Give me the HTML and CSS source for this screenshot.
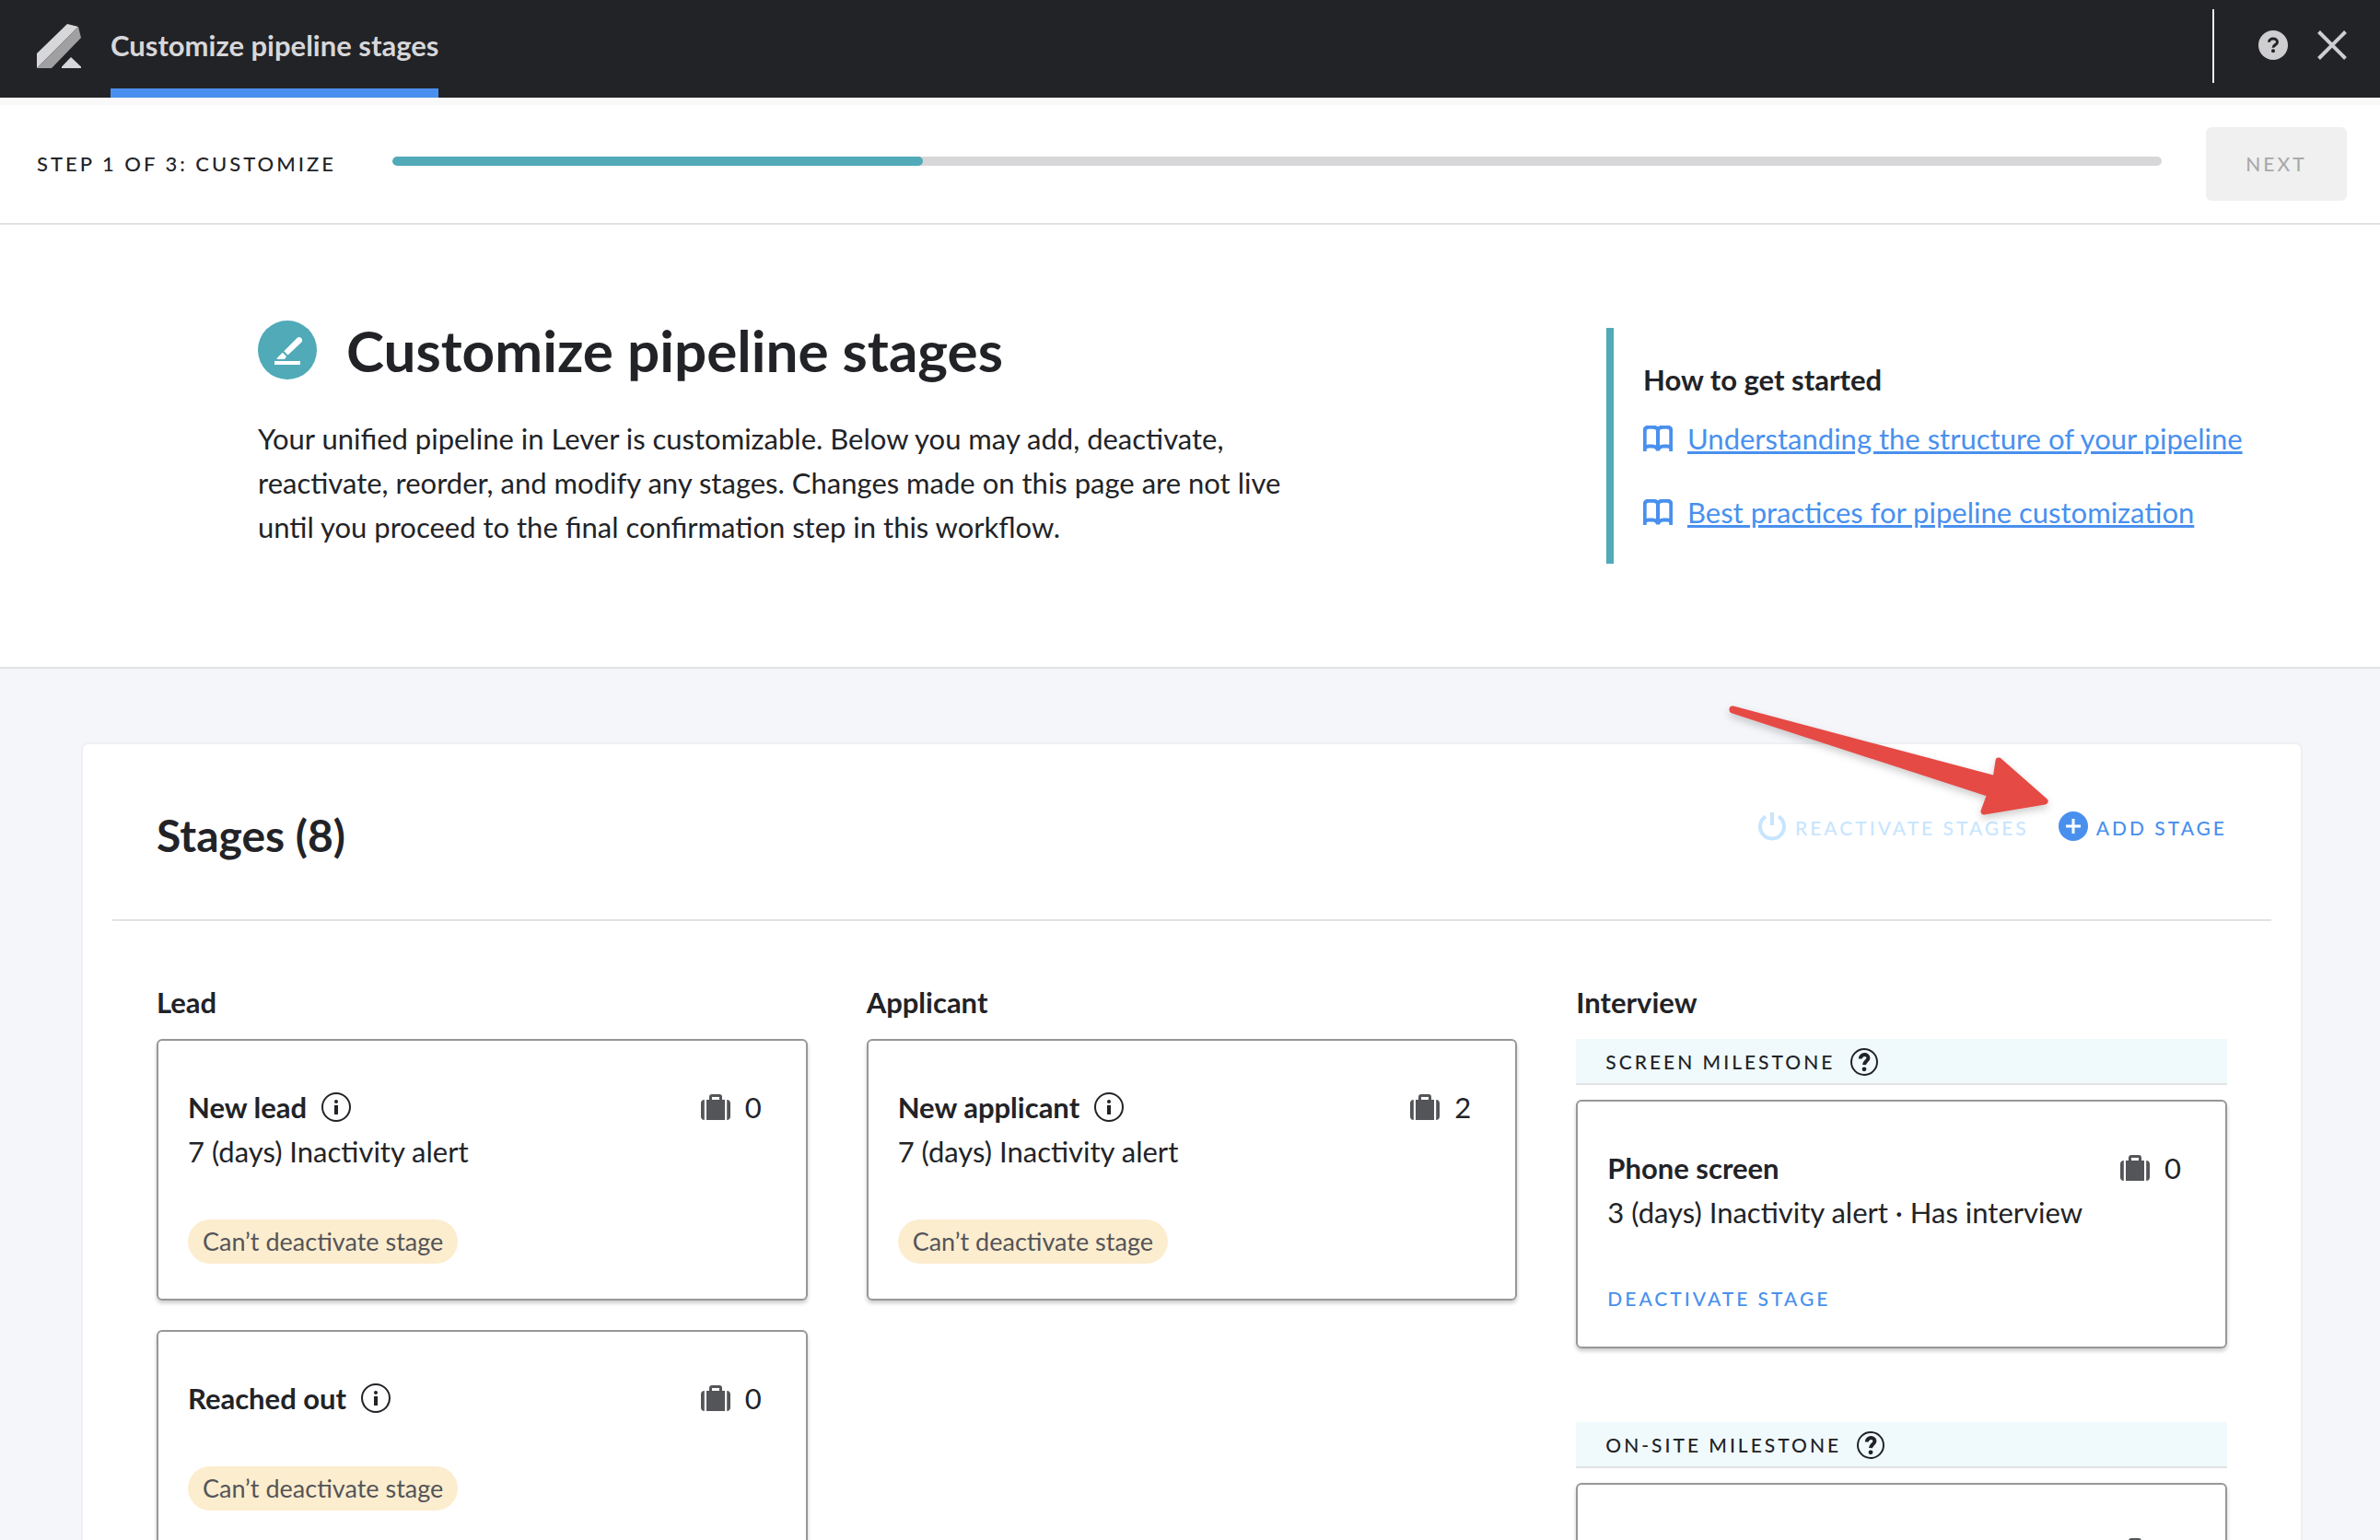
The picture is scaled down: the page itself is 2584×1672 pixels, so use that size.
FILE: index.html
```html
<!DOCTYPE html>
<html lang="en">
<head>
<meta charset="utf-8">
<title>Customize pipeline stages</title>
<link rel="stylesheet" href="styles.css">
</head>
<body>
<svg class="sprite" aria-hidden="true">
  <symbol id="info" viewBox="0 0 32 32"><circle cx="16" cy="16" r="15" fill="none" stroke="currentColor" stroke-width="2"/><rect x="14" y="14" width="4" height="10" fill="currentColor"/><circle cx="16" cy="10" r="2" fill="currentColor"/></symbol>
  <symbol id="question" viewBox="0 0 32 32"><circle cx="16" cy="16" r="14" fill="none" stroke="currentColor" stroke-width="2"/><path d="M11.800 12.500C12 6.500 20.600 6.800 20.400 11.800C20.300 15 16.200 15.300 16 19.200" fill="none" stroke="currentColor" stroke-width="4"/><circle cx="16" cy="23.800" r="2.400" fill="currentColor"/></symbol>
  <symbol id="case" viewBox="0 0 32 28"><path d="M6 6h20v22H6zM3.800 6v22C1.500 28 0 26.500 0 24V10C0 7.500 1.500 6 3.800 6zM28.200 6v22c2.300 0 3.800-1.500 3.800-4V10c0-2.500-1.500-4-3.800-4z" fill="currentColor"/><path d="M10.500 6.500V3Q10.500 1.500 12 1.500h8Q21.500 1.500 21.500 3v3.500" fill="none" stroke="currentColor" stroke-width="3"/></symbol>
  <symbol id="book" viewBox="0 0 32 28"><path d="M1.700 28V5.500Q1.700 1.700 6 1.700h4Q16 1.700 16 6Q16 1.700 22 1.700h4Q30.300 1.700 30.300 5.500V28M16 5v21M1.700 25Q3 22.500 6 22.500h4Q15 22.500 16 27Q17 22.500 22 22.500h4Q29 22.500 30.300 25" fill="none" stroke="currentColor" stroke-width="4"/></symbol>
</svg>

<header class="topbar">
  <svg class="logo" viewBox="0 0 48 48" aria-hidden="true"><path d="M33 0L45 3L0 48V32z" fill="#d7d7d9"/><path d="M45 3L48 15L16 48H0z" fill="#a0a0a2"/><path d="M37 36L48 46.500V48H27V46.500z" fill="#d7d7d9"/></svg>
  <a class="tab" href="#customize">Customize pipeline stages</a>
  <div class="tools">
    <button class="icon-button" type="button" aria-label="Help"><svg viewBox="0 0 32 32"><circle cx="16" cy="16" r="16" fill="#ceced1"/><path d="M11.500 12.800C11.500 7.800 20.500 7.800 20.500 12.800C20.500 15.800 16 15.500 16 18.800" fill="none" stroke="#222327" stroke-width="3"/><circle cx="16" cy="22.300" r="2" fill="#222327"/></svg></button>
    <button class="icon-button" type="button" aria-label="Close"><svg viewBox="0 0 32 32"><path d="M1.500 1.500L30.500 30.500M30.500 1.500L1.500 30.500" stroke="#ceced1" stroke-width="4"/></svg></button>
  </div>
</header>

<div class="stepbar">
  <label class="caps" for="progress">Step 1 of 3: Customize</label>
  <progress id="progress" class="progress" value="30" max="100"></progress>
  <button class="next caps" type="button" disabled>Next</button>
</div>

<section class="hero" id="customize">
  <div class="intro">
    <div class="intro-head">
      <svg class="badge" viewBox="0 0 64 64" aria-hidden="true"><circle cx="32" cy="32" r="32" fill="#50aab8"/><path d="M18 44h28v4H18z" fill="#fff"/><path d="M28.300 33.200L42.500 19Q45 17 47 19Q49 21 47.500 23.500L32.500 37.500zM26.800 34.800L31 39L29 42H20.500Q20.500 40.500 22 39.500z" fill="#fff"/></svg>
      <h1>Customize pipeline stages</h1>
    </div>
    <p>Your unified pipeline in Lever is customizable. Below you may add, deactivate, reactivate, reorder, and modify any stages. Changes made on this page are not live until you proceed to the final confirmation step in this workflow.</p>
  </div>
  <aside class="guide">
    <h2>How to get started</h2>
    <a href="#structure"><svg class="book"><use href="#book"/></svg><span>Understanding the structure of your pipeline</span></a>
    <a href="#practices"><svg class="book"><use href="#book"/></svg><span>Best practices for pipeline customization</span></a>
  </aside>
</section>

<main class="canvas">
  <section class="panel">
    <div class="panel-head">
      <h2>Stages (8)</h2>
      <div class="actions">
        <button class="action caps" type="button" disabled><svg viewBox="0 0 32 32"><path d="M9 5.500A13 13 0 1 0 23 5.500M16 1v14" fill="none" stroke="currentColor" stroke-width="4"/></svg>Reactivate stages</button>
        <button class="action caps" type="button"><svg viewBox="0 0 32 32"><circle cx="16" cy="16" r="16" fill="currentColor"/><path d="M16 8v16M8 16h16" stroke="#fff" stroke-width="3"/></svg>Add stage</button>
      </div>
      <svg class="pointer" viewBox="0 0 360 140" aria-hidden="true"><path d="M11 12L297 88L300 68L350 112L284 123L291 104L11 13z" fill="#e64a45" stroke="#e64a45" stroke-width="7" stroke-linejoin="round"/></svg>
    </div>
    <div class="columns">
      <section class="column">
        <h3>Lead</h3>
        <article class="card">
          <div class="card-head"><h4>New lead</h4><svg class="glyph"><use href="#info"/></svg><span class="count"><svg class="case"><use href="#case"/></svg>0</span></div>
          <p>7 (days) Inactivity alert</p>
          <span class="pill">Can’t deactivate stage</span>
        </article>
        <article class="card">
          <div class="card-head"><h4>Reached out</h4><svg class="glyph"><use href="#info"/></svg><span class="count"><svg class="case"><use href="#case"/></svg>0</span></div>
          <span class="pill">Can’t deactivate stage</span>
        </article>
      </section>
      <section class="column">
        <h3>Applicant</h3>
        <article class="card">
          <div class="card-head"><h4>New applicant</h4><svg class="glyph"><use href="#info"/></svg><span class="count"><svg class="case"><use href="#case"/></svg>2</span></div>
          <p>7 (days) Inactivity alert</p>
          <span class="pill">Can’t deactivate stage</span>
        </article>
      </section>
      <section class="column">
        <h3>Interview</h3>
        <div class="milestone caps">Screen milestone<svg class="glyph"><use href="#question"/></svg></div>
        <article class="card">
          <div class="card-head"><h4>Phone screen</h4><span class="count"><svg class="case"><use href="#case"/></svg>0</span></div>
          <p>3 (days) Inactivity alert · Has interview</p>
          <button class="deactivate caps" type="button">Deactivate stage</button>
        </article>
        <div class="milestone caps">On-site milestone<svg class="glyph"><use href="#question"/></svg></div>
        <article class="card">
          <div class="card-head"><h4>On-site interview</h4><span class="count"><svg class="case"><use href="#case"/></svg>0</span></div>
          <button class="deactivate caps" type="button">Deactivate stage</button>
        </article>
      </section>
    </div>
  </section>
</main>
</body>
</html>
```
FILE: styles.css
```css
:root {
  --ink: #222327;
  --blue: #4990ee;
  --teal: #50aab8;
  --line: #e2e2e3;
}

* { box-sizing: border-box; }

html { overflow: hidden; }

body {
  margin: 0;
  height: 100vh;
  overflow: hidden;
  background: #fff;
  color: var(--ink);
  font: 400 31px/48px Lato, sans-serif;
}

h1, h2, h3, h4, p { margin: 0; font-size: 31px; }

svg { display: block; flex: none; }

button {
  padding: 0;
  border: 0;
  background: none;
  font-family: inherit;
}

.sprite { display: none; }

.caps {
  font-size: 21px;
  line-height: 32px;
  font-weight: 500;
  letter-spacing: 3px;
  text-transform: uppercase;
}

/* Top bar */
.topbar {
  display: flex;
  align-items: stretch;
  height: 106px;
  padding: 0 36px 0 40px;
  background: var(--ink);
}

.logo { width: 48px; height: 48px; margin: 26px 32px 0 0; }

.tab {
  padding-top: 25px;
  border-bottom: 10px solid var(--blue);
  color: #d7d7d9;
  font-weight: 700;
  text-decoration: none;
}

.tools {
  display: flex;
  align-items: center;
  gap: 32px;
  height: 80px;
  margin: 10px 0 0 auto;
  padding: 0 0 2px 48px;
  border-left: 2px solid #ededed;
}

.icon-button svg { width: 32px; height: 32px; }

/* Step bar */
.stepbar {
  display: flex;
  align-items: center;
  height: 138px;
  padding: 0 36px 0 40px;
  border-top: 8px solid #f9f9f9;
  border-bottom: 2px solid var(--line);
}

.stepbar label { width: 386px; font-size: 22px; }

.progress {
  appearance: none;
  flex: 1;
  height: 10px;
  margin: 0 48px 6px 0;
  border: 0;
  border-radius: 5px;
  background: #d7d7d9;
  overflow: hidden;
}

.progress::-webkit-progress-bar { background: #d7d7d9; }
.progress::-webkit-progress-value { background: var(--teal); border-radius: 5px; }

.next {
  width: 153px;
  height: 80px;
  border-radius: 6px;
  background: #f0f0f0;
  color: #a9a9ab;
}

/* Introduction */
.hero {
  display: flex;
  justify-content: space-between;
  align-items: flex-start;
  padding: 104px 144px 112px 280px;
  border-bottom: 2px solid var(--line);
}

.intro { width: 1132px; }

.intro-head { display: flex; align-items: center; gap: 32px; height: 64px; margin-bottom: 40px; }

.badge { width: 64px; height: 64px; }

h1 { font-size: 62px; line-height: 64px; }

.guide {
  width: 696px;
  margin-top: 8px;
  padding: 32px 0 32px 32px;
  border-left: 8px solid var(--teal);
}

.guide h2 { margin-bottom: 16px; }

.guide a {
  display: flex;
  align-items: center;
  gap: 16px;
  color: var(--blue);
}

.guide a + a { margin-top: 32px; }

.book { width: 32px; height: 28px; }

/* Stage panel */
.canvas { padding: 80px 84px 80px 88px; background: #f5f6fa; }

.panel {
  padding: 0 32px 48px;
  border: 2px solid #eff0f3;
  border-radius: 8px;
  background: #fff;
}

.panel-head {
  position: relative;
  display: flex;
  align-items: center;
  justify-content: space-between;
  height: 192px;
  padding: 8px 48px 0;
  border-bottom: 2px solid var(--line);
}

.panel-head h2 { font-size: 48px; line-height: 64px; }

.actions { display: flex; gap: 32px; margin-bottom: 16px; }

.action { display: flex; align-items: center; gap: 9px; color: var(--blue); }
.action:disabled { color: #c7e5ff; }
.action svg { width: 32px; height: 32px; margin-bottom: 4px; }

.pointer {
  position: absolute;
  top: -50px;
  right: 236px;
  width: 360px;
  height: 140px;
  filter: drop-shadow(0 4px 4px rgba(0, 0, 0, 0.2));
}

.columns {
  display: grid;
  grid-template-columns: repeat(3, 1fr);
  gap: 64px;
  padding: 64px 48px 0;
}

.column h3 { margin-bottom: 16px; }

.card {
  padding: 48px 48px 38px 32px;
  border: 2px solid #979799;
  border-radius: 6px;
  box-shadow: 0 3px 4px rgba(0, 0, 0, 0.2);
}

.card + .card { margin-top: 32px; }

.card-head { display: flex; align-items: center; gap: 16px; }

.glyph { width: 32px; height: 32px; }

.count { display: flex; align-items: center; gap: 16px; margin-left: auto; }

.case { width: 32px; height: 28px; color: #545559; }

.pill {
  display: block;
  width: fit-content;
  margin-top: 50px;
  padding: 0 16px;
  border-radius: 24px;
  background: #fcedcf;
  color: #545559;
  font-size: 27px;
}

.milestone {
  display: flex;
  align-items: center;
  gap: 16px;
  height: 50px;
  margin-bottom: 16px;
  padding: 2px 0 0 32px;
  border-bottom: 2px solid var(--line);
  background: #f0fafc;
}

.card + .milestone { margin-top: 80px; }

.deactivate { display: block; margin: 54px 0 -2px; color: var(--blue); }
```
